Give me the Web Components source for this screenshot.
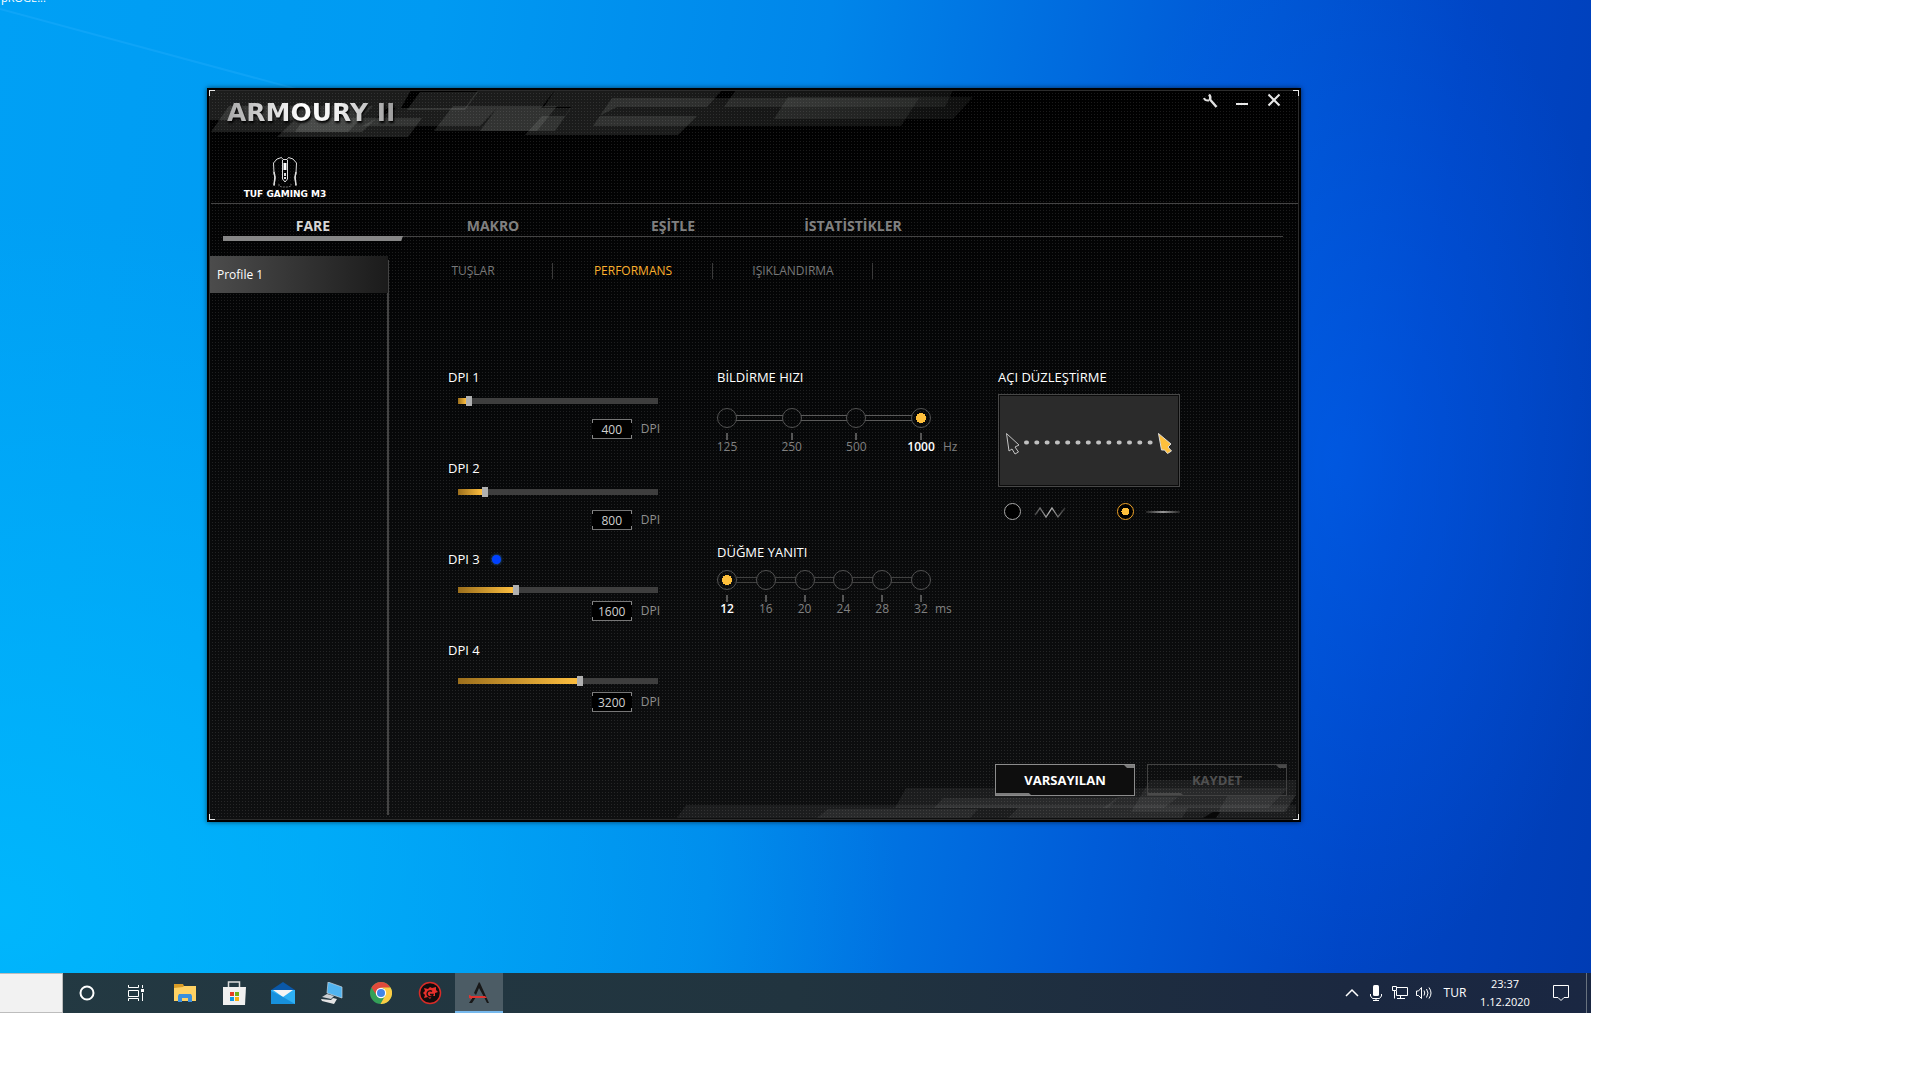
<!DOCTYPE html>
<html lang="tr">
<head>
<meta charset="utf-8">
<title>Armoury II</title>
<style>
    body {
        margin: 0;
        padding-right: 329px;
        background: #fff;
        font-family: "Segoe UI", "Open Sans", "Noto Sans", sans-serif;
        font-size: 13px;
        line-height: 18px;
        color: #fff;
    }
</style>
</head>
<body>
<desk-top>
    <armoury-window>
        <dpi-slider slot="dpi" name="DPI 1" value="400"></dpi-slider>
        <dpi-slider slot="dpi" name="DPI 2" value="800"></dpi-slider>
        <dpi-slider slot="dpi" name="DPI 3" value="1600" low active></dpi-slider>
        <dpi-slider slot="dpi" name="DPI 4" value="3200" low></dpi-slider>
        <step-picker slot="steps" name="BİLDİRME HIZI" steps="125,250,500,1000" value="1000" unit="Hz"></step-picker>
        <step-picker slot="steps" name="DÜĞME YANITI" steps="12,16,20,24,28,32" value="12" unit="ms" dense></step-picker>
        <angle-snap slot="angle">AÇI DÜZLEŞTİRME</angle-snap>
        <armoury-button slot="actions">VARSAYILAN</armoury-button>
        <armoury-button slot="actions" disabled>KAYDET</armoury-button>
    </armoury-window>
    <task-bar slot="taskbar"></task-bar>
</desk-top>

<script>
class DeskTop extends HTMLElement {
    constructor() {
        super();
        this.attachShadow({ mode: "open" });
        this.shadowRoot.innerHTML = `
            <style>
                :host {
                    display: block;
                    position: relative;
                    overflow: hidden;
                    background:
                        radial-gradient(ellipse 300px 520px at 84% 45%, rgba(0, 104, 255, 0.4), transparent),
                        radial-gradient(ellipse 900px 700px at 0% 90%, rgba(0, 190, 255, 0.75), transparent),
                        linear-gradient(98deg, #00a0f5 0%, #009af2 25%, #0086ea 48%, #005cd8 70%, #0046c6 85%, #003cb4 100%);
                }
                .beam {
                    position: absolute;
                    left: 0;
                    top: 0;
                }
                .shortcut {
                    position: absolute;
                    left: 1px;
                    top: -10px;
                    font-size: 11px;
                    line-height: 16px;
                    color: #fff;
                }
                .workspace {
                    padding: 88px 290px 151px 207px;
                }
            </style>
            <svg class="beam" width="300" height="100" aria-hidden="true">
                <path d="M0 9 L300 90" stroke="#2fb4ff" stroke-opacity=".3" stroke-width="2"/>
            </svg>
            <span class="shortcut">pROGE...</span>
            <div class="workspace"><slot></slot></div>
            <slot name="taskbar"></slot>
        `;
    }
}
customElements.define("desk-top", DeskTop);

class ArmouryWindow extends HTMLElement {
    constructor() {
        super();
        this.attachShadow({ mode: "open" });
        this.shadowRoot.innerHTML = `
            <style>
                :host {
                    display: block;
                    position: relative;
                    border: 2px solid #000;
                    box-shadow: 0 0 5px rgba(0, 0, 0, 0.6);
                    background:
                        linear-gradient(rgba(255, 255, 255, 0.09), rgba(255, 255, 255, 0.09)) 0 0 / 0 0 no-repeat,
                        conic-gradient(from 270deg at 1px 1px, rgba(255, 255, 255, 0.1) 90deg, transparent 0) 0 0 / 3px 3px,
                        linear-gradient(#000 0%, #050607 35%, #0e0f10 100%);
                }
                .frame {
                    position: relative;
                    border: 1px solid #2c2c2c;
                }
                .corner {
                    position: absolute;
                    width: 5px;
                    height: 5px;
                    border: 0 solid #e8e8e8;
                }
                .tl { left: -1px; top: -1px; border-width: 1px 0 0 1px; }
                .tr { right: -1px; top: -1px; border-width: 1px 1px 0 0; }
                .bl { left: -1px; bottom: -1px; border-width: 0 0 1px 1px; }
                .br { right: -1px; bottom: -1px; border-width: 0 1px 1px 0; }
                .camo {
                    position: absolute;
                    pointer-events: none;
                }
                .camo.top { left: 0; top: 0; }
                .camo.bottom { right: 0; bottom: 0; }
                header {
                    position: relative;
                    border-bottom: 1px solid #444;
                    margin: 0 0 0 1px;
                    padding-bottom: 3px;
                }
                .titlebar {
                    display: flex;
                    justify-content: space-between;
                    align-items: flex-start;
                    padding: 0 12px 0 16px;
                }
                h1 {
                    margin: 8px 0 0;
                    font: bold 25px/28px "DejaVu Sans", sans-serif;
                    background: linear-gradient(90deg, #a8a8a8, #fff 45%, #f2f2f2 65%, #999);
                    -webkit-background-clip: text;
                    background-clip: text;
                    color: transparent;
                    filter: drop-shadow(1px 2px 1px #000);
                }
                .controls {
                    display: flex;
                    gap: 8px;
                }
                .controls button {
                    width: 24px;
                    height: 24px;
                    padding: 0;
                    border: 0;
                    background: none;
                }
                .device {
                    display: flex;
                    flex-direction: column;
                    align-items: center;
                    width: 80px;
                    margin: 29px 0 0 34px;
                    font: bold 9px/12px "DejaVu Sans", sans-serif;
                    white-space: nowrap;
                }
                nav.tabs {
                    display: flex;
                    position: relative;
                    margin: 0 15px 0 13px;
                    border-bottom: 1px solid #444;
                }
                .tabs a {
                    width: 180px;
                    height: 32px;
                    box-sizing: border-box;
                    padding-top: 12px;
                    text-align: center;
                    font-weight: bold;
                    font-size: 14px;
                    line-height: 20px;
                    color: #808080;
                    text-decoration: none;
                }
                .tabs a.on { color: #d6d6d6; }
                .tabs::after {
                    content: "";
                    position: absolute;
                    left: 0;
                    top: 32px;
                    width: 180px;
                    height: 5px;
                    background: #868686;
                    clip-path: polygon(0 0, 100% 0, 99% 100%, 0 100%);
                }
                .body {
                    display: grid;
                    grid-template-columns: 179px 1fr;
                    padding: 19px 0 4px;
                }
                aside {
                    background: linear-gradient(#444, #444) right 4px / 2px 100% no-repeat;
                }
                aside button {
                    display: block;
                    width: 178px;
                    height: 37px;
                    padding: 0 0 0 7px;
                    border: 0;
                    background: linear-gradient(90deg, #4c4c4c, #1b1b1b);
                    color: #fff;
                    font: inherit;
                    font-size: 12px;
                    text-align: left;
                }
                .subtabs {
                    display: flex;
                    margin: 6px 0 0 4px;
                }
                .subtabs a {
                    width: 160px;
                    text-align: center;
                    font-size: 12px;
                    color: #787878;
                    text-decoration: none;
                    background: linear-gradient(#3a3a3a, #3a3a3a) right center / 1px 16px no-repeat;
                }
                .subtabs a.on { color: #fbb02d; }
                .settings {
                    display: grid;
                    grid-template-columns: 269fr 281fr 300fr;
                    padding: 88px 0 0 59px;
                }
                .column {
                    display: flex;
                    flex-direction: column;
                }
                .dpi { gap: 20px; }
                .steps { gap: 89px; }
                footer {
                    position: relative;
                    display: flex;
                    justify-content: flex-end;
                    gap: 12px;
                    padding: 52px 11px 19px 0;
                }
            </style>
            <div class="frame">
                <svg class="camo top" width="780" height="50" viewBox="3 3 780 50" aria-hidden="true">
                    <defs>
                        <linearGradient id="fade" gradientUnits="userSpaceOnUse" x1="0" y1="0" x2="780" y2="0">
                            <stop offset="0" stop-color="#c8ccc8"/>
                            <stop offset=".6" stop-color="#b4b8b4"/>
                            <stop offset="1" stop-color="#606460"/>
                        </linearGradient>
                    </defs>
                    <g fill="url(#fade)" fill-opacity=".14">
                        <path d="M3 2H116L96 32H3z"/>
                        <path d="M22 18H166L141 44H4z"/>
                        <path d="M90 30H215L201 49H70z"/>
                        <path d="M116 2H204L194 20H104z"/>
                        <path d="M104 20H180L155 44H88z"/>
                        <path d="M213 4H271L258 22H200z"/>
                        <path d="M190 20H290L273 38H155z"/>
                        <path d="M271 2H348L334 20H258z"/>
                        <path d="M246 18H350L330 43H227z"/>
                        <path d="M290 20H364L348 43H273z"/>
                        <path d="M335 28H490L471 47H318z"/>
                        <path d="M348 2H515L500 19H337z"/>
                        <path d="M364 19H410L392 28H358z"/>
                        <path d="M405 10H712L694 38H386z"/>
                        <path d="M529 2H746L738 19H517z"/>
                        <path d="M581 9H766L746 31H567z"/>
                    </g>
                </svg>
                <svg class="camo bottom" width="630" height="44" viewBox="0 0 630 44" aria-hidden="true">
                    <g fill="#c8ccc8" fill-opacity=".08">
                        <path d="M18 30H628V43H9z"/>
                        <path d="M160 34H310L302 43H149z"/>
                        <path d="M238 13H620L600 33H227z"/>
                        <path d="M275 23H450L440 33H266z"/>
                        <path d="M350 33H520L514 43H340z"/>
                        <path d="M450 22H510L496 33H435z"/>
                        <path d="M482 5H628V20L618 37H463z"/>
                        <path d="M560 20H628L616 37H550z"/>
                    </g>
                    <path d="M545 37H552L548 43H535z" fill="#080808"/>
                </svg>

                <header>
                    <div class="titlebar">
                        <h1>ARMOURY II</h1>
                        <div class="controls">
                            <button aria-label="Ayarlar">
                                <svg width="24" height="24" viewBox="0 0 24 24" fill="none" stroke="#e0e0e0">
                                    <path d="M11 3.500q2 2 1 5l6.500 7.500" stroke-width="2.400"/>
                                    <path d="M6 7q1 3 5 2.500" stroke-width="2"/>
                                </svg>
                            </button>
                            <button aria-label="Simge durumuna küçült">
                                <svg width="24" height="24" viewBox="0 0 24 24"><path d="M6 12h12v2H6z" fill="#e8e8e8"/></svg>
                            </button>
                            <button aria-label="Kapat">
                                <svg width="24" height="24" viewBox="0 0 24 24"><path d="M6.500 3.500l11 11M17.500 3.500l-11 11" stroke="#e8e8e8" stroke-width="2"/></svg>
                            </button>
                        </div>
                    </div>
                    <div class="device">
                        <svg width="26" height="32" viewBox="0 0 26 32" fill="none" stroke="#dcdcdc">
                            <path d="M9.500 1.500 5 3 1.500 7 2 17 3 22 2 30M16.500 1.500 21 3 24.500 7 24 17 23 22 24 30"/>
                            <path d="M9.500 1.500 11 3.500h4l1.500-2M10.500 4v19l2.500 3 2.500-3V4"/>
                            <path d="M2 16l1 5-1 8M24 16l-1 5 1 8" stroke-width="1.500"/>
                            <path d="M13 7v7" stroke-width="3" stroke="#fff"/>
                            <path d="M13 17v6" stroke-width="2" stroke-dasharray="3 1"/>
                            <path d="M7 28v2l3 1h6l3-1v-2" stroke="#666" stroke-dasharray="2 1"/>
                        </svg>
                        <span>TUF GAMING M3</span>
                    </div>
                </header>

                <nav class="tabs">
                    <a class="on" href="#fare">FARE</a>
                    <a href="#makro">MAKRO</a>
                    <a href="#esitle">EŞİTLE</a>
                    <a href="#istatistikler">İSTATİSTİKLER</a>
                </nav>

                <div class="body">
                    <aside><button>Profile 1</button></aside>
                    <main>
                        <nav class="subtabs">
                            <a href="#tuslar">TUŞLAR</a>
                            <a class="on" href="#performans">PERFORMANS</a>
                            <a href="#isiklandirma">IŞIKLANDIRMA</a>
                        </nav>
                        <div class="settings">
                            <div class="column dpi"><slot name="dpi"></slot></div>
                            <div class="column steps"><slot name="steps"></slot></div>
                            <div class="column"><slot name="angle"></slot></div>
                        </div>
                        <footer><slot name="actions"></slot></footer>
                    </main>
                </div>
                <i class="corner tl"></i><i class="corner tr"></i>
                <i class="corner bl"></i><i class="corner br"></i>
            </div>
        `;
    }
}
customElements.define("armoury-window", ArmouryWindow);

class DpiSlider extends HTMLElement {
    constructor() {
        super();
        this.attachShadow({ mode: "open" });
        this.shadowRoot.innerHTML = `
            <style>
                :host { display: block; width: 212px; }
                .title {
                    display: flex;
                    align-items: center;
                    gap: 12px;
                }
                .led { display: none; }
                :host([active]) .led {
                    display: block;
                    width: 9px;
                    height: 9px;
                    border-radius: 50%;
                    background: #0040ff;
                    box-shadow: 0 0 3px #2878c8;
                }
                input[type="range"] {
                    display: block;
                    appearance: none;
                    width: 200px;
                    height: 10px;
                    margin: 10px 0 13px 10px;
                    background: linear-gradient(90deg, #9c6f1c, #ffc040) left center / var(--fill) 6px no-repeat,
                        linear-gradient(#3e3e3e, #3e3e3e) left center / 100% 6px no-repeat;
                }
                :host([low]) input[type="range"] {
                    margin-top: 17px;
                    margin-bottom: 6px;
                }
                input[type="range"]::-webkit-slider-thumb {
                    appearance: none;
                    width: 6px;
                    height: 10px;
                    background: #b0b0b0;
                }
                .value {
                    display: flex;
                    justify-content: flex-end;
                    gap: 9px;
                    line-height: 20px;
                    color: #8f8f8f;
                }
                .value span { font-size: 12px; }
                .value input {
                    box-sizing: border-box;
                    width: 40px;
                    height: 20px;
                    padding: 0;
                    border: 1px solid #777;
                    border-width: 1px 0;
                    background:
                        linear-gradient(#888, #888) 0 0 / 1px 3px no-repeat,
                        linear-gradient(#888, #888) 100% 0 / 1px 3px no-repeat,
                        linear-gradient(#888, #888) 0 100% / 1px 3px no-repeat,
                        linear-gradient(#888, #888) 100% 100% / 1px 3px no-repeat,
                        #000;
                    color: #d0d0d0;
                    font: 12px/18px "Segoe UI", "Open Sans", sans-serif;
                    text-align: center;
                }
            </style>
            <div class="title"><label for="range"></label><i class="led"></i></div>
            <input id="range" type="range" min="200" max="5100" step="100">
            <div class="value"><input type="text" aria-label="DPI"><span>DPI</span></div>
        `;
    }

    connectedCallback() {
        const range = this.shadowRoot.querySelector("#range");
        const text = this.shadowRoot.querySelector(".value input");
        this.shadowRoot.querySelector("label").textContent = this.getAttribute("name");
        range.value = this.getAttribute("value");

        const update = () => {
            text.value = range.value;
            range.style.setProperty("--fill", (range.value - 200) / 49 + "%");
        };
        range.addEventListener("input", update);
        update();
    }
}
customElements.define("dpi-slider", DpiSlider);

class StepPicker extends HTMLElement {
    constructor() {
        super();
        this.attachShadow({ mode: "open" });
    }

    connectedCallback() {
        const value = this.getAttribute("value");
        const options = this.getAttribute("steps").split(",").map(step => `
            <label><input type="radio" name="step" value="${step}" ${step === value ? "checked" : ""}><i></i><span>${step}</span></label>
        `).join(`<div class="rail"></div>`);

        this.shadowRoot.innerHTML = `
            <style>
                :host { display: block; --line: #5a5a5a; --top: 22px; --gap: 12px; }
                :host([dense]) { --line: #404040; --top: 9px; --gap: 4px; }
                fieldset {
                    margin: 0;
                    padding: 0;
                    border: 0;
                    min-width: 0;
                }
                legend { padding: 0; }
                .row {
                    display: flex;
                    align-items: flex-end;
                    gap: var(--gap);
                    margin-top: var(--top);
                }
                .track {
                    display: flex;
                    width: 214px;
                }
                label {
                    display: flex;
                    flex-direction: column;
                    align-items: center;
                    width: 20px;
                    font-size: 12px;
                    line-height: 14px;
                    color: #808080;
                }
                input {
                    appearance: none;
                    box-sizing: border-box;
                    width: 20px;
                    height: 20px;
                    margin: 0;
                    border: 1px solid #525252;
                    border-radius: 50%;
                }
                input:checked {
                    background: radial-gradient(circle, #ffc03c 0 5px, transparent 5px);
                }
                input:checked ~ span {
                    color: #fff;
                    font-weight: 600;
                }
                i {
                    width: 2px;
                    height: 7px;
                    margin: 5px 0 0;
                    background: #555;
                }
                .rail {
                    flex: 1;
                    box-sizing: border-box;
                    height: 6px;
                    margin: 7px -1px 0;
                    border: 1px solid var(--line);
                    border-width: 1px 0;
                }
                .unit {
                    font-size: 12px;
                    line-height: 14px;
                    color: #808080;
                }
            </style>
            <fieldset>
                <legend>${this.getAttribute("name")}</legend>
                <div class="row">
                    <div class="track">${options}</div>
                    <span class="unit">${this.getAttribute("unit")}</span>
                </div>
            </fieldset>
        `;
    }
}
customElements.define("step-picker", StepPicker);

class AngleSnap extends HTMLElement {
    constructor() {
        super();
        this.attachShadow({ mode: "open" });
        this.shadowRoot.innerHTML = `
            <style>
                :host { display: block; width: 182px; }
                .preview {
                    display: block;
                    box-sizing: border-box;
                    width: 182px;
                    height: 93px;
                    margin-top: 8px;
                    border: 1px solid #484848;
                    outline: 1px solid #0b0b0b;
                    outline-offset: -2px;
                    background: #2b2b2b;
                }
                .modes {
                    display: flex;
                    justify-content: space-between;
                    margin: 16px 0 0 6px;
                }
                label {
                    display: flex;
                    align-items: center;
                    gap: 12px;
                }
                input {
                    appearance: none;
                    box-sizing: border-box;
                    width: 17px;
                    height: 17px;
                    margin: 0;
                    border: 1px solid #aaa;
                    border-radius: 50%;
                    background: #000;
                }
                input:checked {
                    border-color: #f0a428;
                    background: radial-gradient(circle, #ffc03c 0 4px, #000 4px);
                }
            </style>
            <div><slot></slot></div>
            <svg class="preview" viewBox="0 0 180 91" aria-hidden="true">
                <path d="M7.500 38.500 20 50l-4 2 3.500 5-3.500 2-3-5-3 2z" fill="none" stroke="#c4c4c4"/>
                <path d="M27 47.500H155" stroke="#c0c0c0" stroke-width="4" stroke-linecap="round" stroke-dasharray="1 9.300"/>
                <path d="M159.500 38.500 172 49l-3 3 3.500 4-4 2.500-3-3.500-3 0z" fill="#ffc03c" stroke="#ddd"/>
            </svg>
            <div class="modes">
                <label><input type="radio" name="snap" aria-label="Kapalı">
                    <svg width="34" height="16" viewBox="0 0 34 16">
                        <defs><linearGradient id="z"><stop offset="0" stop-color="#444"/><stop offset=".5" stop-color="#bbb"/><stop offset="1" stop-color="#333"/></linearGradient></defs>
                        <path d="M2 11 7 4l6 9 6-9 6 9 7-9" fill="none" stroke="url(#z)" stroke-width="1.300"/>
                    </svg>
                </label>
                <label><input type="radio" name="snap" aria-label="Açık" checked>
                    <svg width="34" height="16" viewBox="0 0 34 16">
                        <defs><linearGradient id="l"><stop offset="0" stop-color="#222"/><stop offset=".5" stop-color="#999"/><stop offset="1" stop-color="#222"/></linearGradient></defs>
                        <path d="M0 7h34v2H0z" fill="url(#l)"/>
                    </svg>
                </label>
            </div>
        `;
    }
}
customElements.define("angle-snap", AngleSnap);

class ArmouryButton extends HTMLElement {
    constructor() {
        super();
        this.attachShadow({ mode: "open" });
        this.shadowRoot.innerHTML = `
            <style>
                :host { display: block; }
                button {
                    display: block;
                    position: relative;
                    width: 140px;
                    height: 32px;
                    padding: 0;
                    border: 1px solid #8c8c8c;
                    background: #0e0e0e;
                    color: #fff;
                    font: bold 13px/18px "Segoe UI", "Open Sans", sans-serif;
                }
                button::before, button::after {
                    content: "";
                    position: absolute;
                    background: #7c7c7c;
                }
                button::before {
                    top: 0;
                    right: 0;
                    width: 10px;
                    height: 3px;
                    clip-path: polygon(0 0, 100% 0, 100% 100%, 30% 100%);
                }
                button::after {
                    left: 0;
                    bottom: 0;
                    width: 35px;
                    height: 2px;
                    clip-path: polygon(0 0, 94% 0, 100% 100%, 0 100%);
                }
                button:disabled {
                    border-color: #424242;
                    background: none;
                    color: #505050;
                }
                button:disabled::before, button:disabled::after { background: #4a4a4a; }
            </style>
            <button><slot></slot></button>
        `;
    }

    connectedCallback() {
        this.shadowRoot.querySelector("button").disabled = this.hasAttribute("disabled");
    }
}
customElements.define("armoury-button", ArmouryButton);

class TaskBar extends HTMLElement {
    constructor() {
        super();
        this.attachShadow({ mode: "open" });
        this.shadowRoot.innerHTML = `
            <style>
                :host {
                    display: flex;
                    height: 40px;
                    background: linear-gradient(90deg, #233942, #21343f 50%, #1b2840 85%, #1a2742);
                    font-size: 12px;
                    line-height: 18px;
                }
                input {
                    box-sizing: border-box;
                    width: 63px;
                    height: 40px;
                    border: 1px solid #bdbdbd;
                    border-left: 0;
                    background: #f2f2f2;
                }
                button {
                    display: flex;
                    align-items: center;
                    justify-content: center;
                    padding: 0;
                    border: 0;
                    background: none;
                    color: inherit;
                    font: inherit;
                }
                .apps {
                    display: flex;
                    flex: 1;
                    gap: 1px;
                }
                .apps button {
                    width: 48px;
                    height: 40px;
                }
                .apps .on {
                    background: #4c5c65;
                    box-shadow: inset 0 -2px #76b9ed;
                }
                .tray {
                    display: flex;
                    align-items: center;
                }
                .tray .icon { width: 24px; height: 40px; }
                .lang { width: 38px; }
                .clock {
                    flex-direction: column;
                    width: 62px;
                    font-size: 11px;
                }
                .tray .notes { width: 50px; height: 40px; }
                .show {
                    width: 5px;
                    height: 40px;
                    border-left: 1px solid #68727e;
                }
            </style>
            <input type="text" aria-label="Ara">
            <div class="apps">
                <button aria-label="Cortana"><svg width="18" height="18"><circle cx="9" cy="9" r="6.500" fill="none" stroke="#fff" stroke-width="2"/></svg></button>
                <button aria-label="Görev Görünümü">
                    <svg width="18" height="18" viewBox="0 0 18 18" fill="none" stroke="#fff">
                        <path d="M1.500 1v2.500h10V1M1.500 6.500h10v6h-10zM1.500 17v-2.500h10V17M15.500 1v3M15.500 9v8"/>
                        <path d="M14 5h3v3h-3z" fill="#fff" stroke="none"/>
                    </svg>
                </button>
                <button aria-label="Dosya Gezgini">
                    <svg width="22" height="20" viewBox="0 0 22 20">
                        <path d="M0 1h9l1 2h11v5H0z" fill="#d99c26"/>
                        <path d="M0 5l9-1 1-1h12v15H0z" fill="#ffd264"/>
                        <path d="M4 19v-6l1-2h12l1 2v6h-4v-4H8v4z" fill="#3a8fdc"/>
                    </svg>
                </button>
                <button aria-label="Microsoft Store">
                    <svg width="24" height="24" viewBox="0 0 24 24">
                        <path d="M6.500 7V1h11v6" fill="none" stroke="#ddd" stroke-width="1.500"/>
                        <path d="M1 6h23l-1 18H1z" fill="#f0f0f0"/>
                        <path d="M8 11h4v4H8z" fill="#e83c24"/><path d="M13 11h4v4h-4z" fill="#72b016"/>
                        <path d="M8 16h4v4H8z" fill="#0f98e4"/><path d="M13 16h4v4h-4z" fill="#f8b010"/>
                    </svg>
                </button>
                <button aria-label="Posta">
                    <svg width="24" height="22" viewBox="0 0 24 22">
                        <path d="M0 8 12 0l12 8z" fill="#0a58a8"/>
                        <path d="M0 8h24v14H0z" fill="#2eb0f4"/>
                        <path d="M2 8h20L12 15z" fill="#f4f4f4"/>
                        <path d="M0 9v13h24L12 15z" fill="#1790dc"/>
                    </svg>
                </button>
                <button aria-label="Bilgisayar">
                    <svg width="22" height="22" viewBox="0 0 22 22">
                        <path d="M7 0 21 5v11L6 11z" fill="#50b4f0" stroke="#c8d4dc" stroke-width=".7"/>
                        <path d="M6 12l7 2-3 3-9-2z" fill="#ccd0d4"/>
                        <path d="M0 17l10 1 2-2 4 1-3 5-12-3z" fill="#e4e4e4"/>
                    </svg>
                </button>
                <button aria-label="Google Chrome">
                    <svg width="22" height="22" viewBox="0 0 22 22">
                        <circle cx="11" cy="11" r="11" fill="#34a058"/>
                        <path d="M1.500 5.500A11 11 0 0 1 20.500 5.500L11 6.500 6.500 13z" fill="#e04a3c"/>
                        <path d="M20.500 5.500A11 11 0 0 1 10.500 22L15.500 13 14 6.500 11 5.500z" fill="#fccc44"/>
                        <circle cx="11" cy="11" r="5.200" fill="#fff"/><circle cx="11" cy="11" r="4" fill="#4285e8"/>
                    </svg>
                </button>
                <button aria-label="Garena">
                    <svg width="24" height="24" viewBox="0 0 24 24">
                        <circle cx="12" cy="12" r="10.500" fill="#120c0c" stroke="#d82c28" stroke-width="1.500"/>
                        <path d="M5 12l2-2-1-3 4 1 2-2 2 1 4-1v3l2 2-3 1 0 3-3 0-2 3-2-2-4 1 1-3z" fill="#e8302c"/>
                        <path d="M14 10.500a3 3 0 1 0 1 3h-3" fill="none" stroke="#181010" stroke-width="1.400"/>
                    </svg>
                </button>
                <button class="on" aria-label="Armoury">
                    <svg width="22" height="22" viewBox="0 0 22 22">
                        <path d="M11 0 6 11l2 2 3-7 5 9 3 6h2L12 1zM5 15l-4 6h3l4-6z" fill="#181818"/>
                        <path d="M1 13h1l1 1h14l2 2H4v1L1 16z" fill="#e03430"/>
                    </svg>
                </button>
            </div>
            <div class="tray">
                <button class="icon" aria-label="Gizli simgeler"><svg width="14" height="10"><path d="M1 8l6-6 6 6" fill="none" stroke="#fff" stroke-width="1.500"/></svg></button>
                <button class="icon" aria-label="Mikrofon">
                    <svg width="12" height="18" viewBox="0 0 12 18">
                        <rect x="3" y="1" width="6" height="11" rx="1.500" fill="#fff"/>
                        <path d="M.5 10v2l2 2.500h7l2-2.500v-2M6 14v3M3 16.500h6" fill="none" stroke="#fff"/>
                    </svg>
                </button>
                <button class="icon" aria-label="Ağ">
                    <svg width="18" height="16" viewBox="0 0 18 16" fill="none" stroke="#fff">
                        <path d="M6 2.500h10.500v8H5.500V6M9.500 10.500v3M6 13.500h8M1.500 1.500h4v4h-4zM3.500 5.500v8"/>
                    </svg>
                </button>
                <button class="icon" aria-label="Ses">
                    <svg width="18" height="16" viewBox="0 0 18 16" fill="none" stroke="#fff">
                        <path d="M1.500 6v4.500h2l3 3v-11l-3 3.500zM9 5.500q1.500 2.500 0 5M11.500 4q3 4 0 8.500M14 2.500q4 5.500 0 11"/>
                    </svg>
                </button>
                <button class="lang">TUR</button>
                <button class="clock"><span>23:37</span><span>1.12.2020</span></button>
                <button class="notes" aria-label="Bildirimler"><svg width="18" height="18"><path d="M1.500 1.500h15v12H12l-3 3-3-3H1.500z" fill="none" stroke="#fff"/></svg></button>
                <button class="show" aria-label="Masaüstünü göster"></button>
            </div>
        `;
    }
}
customElements.define("task-bar", TaskBar);
</script>
</body>
</html>
